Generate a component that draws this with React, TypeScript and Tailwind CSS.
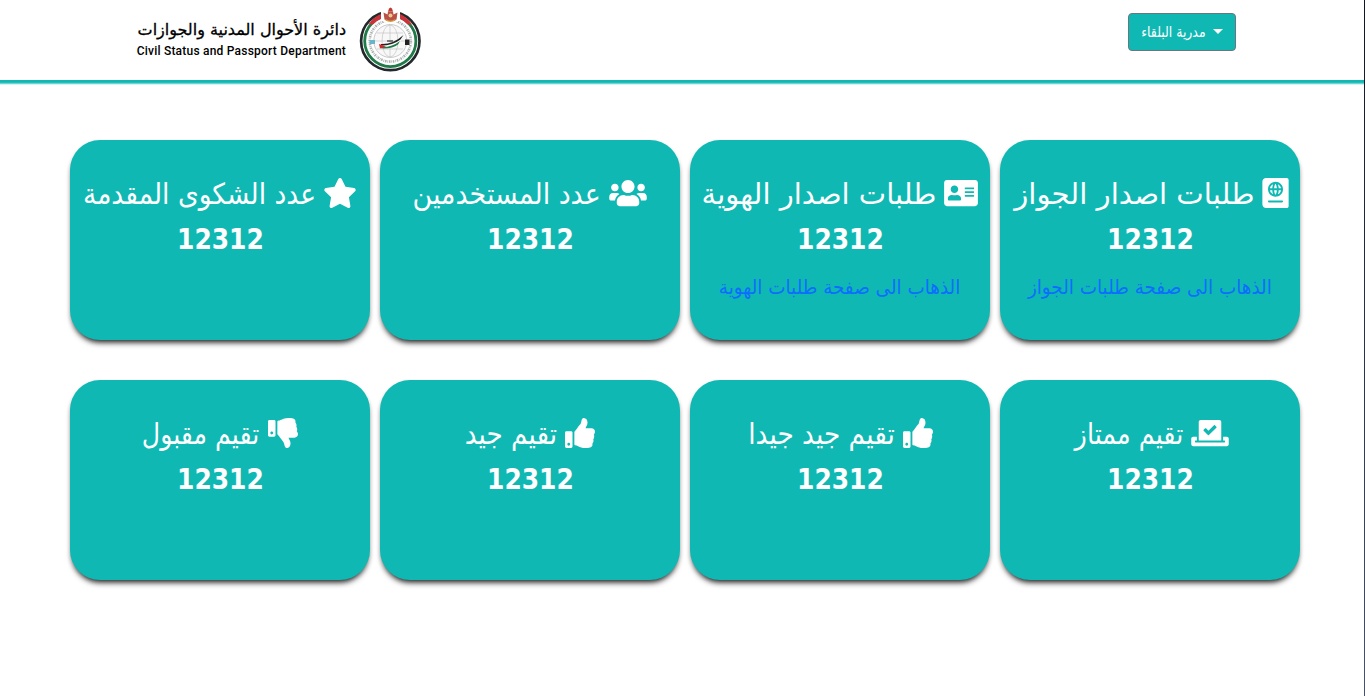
import type { ReactNode } from "react";
import { FaAddressCard, FaPassport, FaStar, FaThumbsDown, FaThumbsUp, FaUsers, FaVoteYea } from "react-icons/fa";

type Stat = {
  title: string;
  titleBox: string;
  titleScale: string;
  value: string;
  icon: ReactNode;
  link?: string;
};

const stats: Stat[] = [
  { title: "طلبات اصدار الجواز", titleBox: "w-[240px] ml-[3px]", titleScale: "scale-x-[1.007]", value: "12312", icon: <FaPassport className="h-[30px] w-[27px] shrink-0" />, link: "الذهاب الى صفحة طلبات الجواز" },
  { title: "طلبات اصدار الهوية", titleBox: "w-[233px]", titleScale: "scale-x-100", value: "12312", icon: <FaAddressCard className="h-[30px] w-[34px] shrink-0" />, link: "الذهاب الى صفحة طلبات الهوية" },
  { title: "عدد المستخدمين", titleBox: "w-[187px]", titleScale: "scale-x-[0.926]", value: "12312", icon: <FaUsers className="h-[30px] w-[38px] shrink-0" /> },
  { title: "عدد الشكوى المقدمة", titleBox: "w-[232px]", titleScale: "scale-x-[0.914]", value: "12312", icon: <FaStar className="h-[30px] w-[34px] shrink-0" /> },
  { title: "تقيم ممتاز", titleBox: "w-[109px] ml-[3px]", titleScale: "scale-x-[0.877]", value: "12312", icon: <FaVoteYea className="h-[30px] w-[38px] shrink-0" /> },
  { title: "تقيم جيد جيدا", titleBox: "w-[146px] ml-px", titleScale: "scale-x-[0.91]", value: "12312", icon: <FaThumbsUp className="h-[30px] w-[30px] shrink-0" /> },
  { title: "تقيم جيد", titleBox: "w-[92px]", titleScale: "scale-x-[0.906]", value: "12312", icon: <FaThumbsUp className="h-[30px] w-[30px] shrink-0" /> },
  { title: "تقيم مقبول", titleBox: "w-[117px]", titleScale: "scale-x-[0.869]", value: "12312", icon: <FaThumbsDown className="h-[30px] w-[30px] shrink-0" /> },
];

function Emblem() {
  return (
    <svg viewBox="0 0 64 66" className="h-[66px] w-[64px]">
      <circle cx="32.3" cy="35" r="29.2" fill="#fff" stroke="#22282b" strokeWidth="2.7" />
      <circle cx="32.3" cy="35" r="25.6" fill="none" stroke="#1f7a48" strokeWidth="2.8" />
      <path d="M10.5 18.5 A28 28 0 0 1 24 7.5 L24 12.5 A24 24 0 0 0 15 18.5Z" fill="#c9343a" />
      <path d="M54.1 18.5 A28 28 0 0 0 41 7.5 L41 12.5 A24 24 0 0 1 49.6 18.5Z" fill="#c9343a" />
      <circle cx="32.3" cy="35" r="20.6" fill="none" stroke="#aeb2b2" strokeWidth="2.6" strokeDasharray="1.6 .8 .7 .9" />
      <circle cx="32.3" cy="35" r="16.5" fill="#f8f8f8" stroke="#b5b5b5" strokeWidth=".7" />
      <g fill="none" stroke="#bcbcbc" strokeWidth=".6">
        <ellipse cx="32" cy="35" rx="8" ry="16" />
        <path d="M16 35H48M19 27H45M19 43H45M32 19V51" />
      </g>
      <path d="M21 38.5Q35 39 45.5 29L42 36Q35 42 22 42Z" fill="#fff" />
      <path d="M23 38Q35 38.5 45.5 29L42.5 33.5Q35 39.5 23 39.5Z" fill="#222" />
      <path d="M23 41Q34 41.5 42 35L40 38.5Q34 43 23 42.3Z" fill="#1f7a48" />
      <path d="M21 38L28 40.2L22 42.6Z" fill="#d8232e" />
      <path d="M29 35H35" stroke="#333" strokeWidth="1.2" />
      <rect x="11.5" y="34" width="5.5" height="4" fill="#69b4ca" />
      <rect x="47" y="33.5" width="4.5" height="5.5" fill="#222" />
      <path d="M23 2H42V14.5Q37 17 32.5 17Q28 17 23 14.5Z" fill="#fff" />
      <path d="M26.5 13.5L25.5 6.5L29.5 8.5L30 5.5H35L35.5 8.5L39.5 6.5L38.5 13.5L36 15H29Z" fill="#b9504a" />
      <path d="M30 5.5L31 2.5L32.5 1.5L34 2.5L35 5.5Z" fill="#c23a35" />
      <circle cx="32.5" cy="9.5" r="2" fill="#ecc98b" />
      <path d="M27.5 13.5Q32.5 17 37.5 13.5" fill="none" stroke="#d29d3f" strokeWidth="1.4" />
    </svg>
  );
}

function Header() {
  return (
    <header>
      <div className="flex h-20 items-start gap-3 pl-[134px]">
        <div className="flex w-[212px] flex-col items-end pt-[18px] text-black">
          <p dir="rtl" className="whitespace-nowrap font-['DejaVu_Sans',sans-serif] text-[16px] leading-[24px] [-webkit-text-stroke:0.3px_black]">دائرة الأحوال المدنية والجوازات</p>
          <p className="mt-px whitespace-nowrap font-['Roboto',sans-serif] text-[12px] font-medium leading-[16px] tracking-[0.22px]">Civil Status and Passport Department</p>
        </div>
        <div className="mt-[6px] shrink-0"><Emblem /></div>
      </div>
      <div className="h-[2px] bg-[#10b8b3]" />
      <div className="h-px bg-[#25beb9]" />
      <div className="h-px bg-[#6fd4d1]" />
      <div className="h-px bg-[#d5f2f1]" />
    </header>
  );
}

function StatCard({ stat }: { stat: Stat }) {
  return (
    <section className="flex h-[200px] w-[300px] flex-col items-center rounded-[30px] bg-[#10b8b3] pt-[33px] text-white shadow-[0_5px_6px_-3px_rgba(0,0,0,0.95),0_2px_4px_rgba(0,0,0,0.12)]">
      <h2 className="flex h-[39px] items-center gap-2 whitespace-nowrap">
        {stat.icon}
        <span className={`flex justify-center pt-[3px] ${stat.titleBox}`}>
          <span className={`shrink-0 font-['DejaVu_Sans',sans-serif] text-[29px] leading-[39px] ${stat.titleScale}`}>{stat.title}</span>
        </span>
      </h2>
      <p className="mt-[5px] scale-x-[0.86] font-['DejaVu_Sans',sans-serif] text-[29px] font-bold leading-[45px]">{stat.value}</p>
      {stat.link && (
        <a href="#" className="mt-[10px] scale-x-[0.918] whitespace-nowrap font-['DejaVu_Sans',sans-serif] text-[20px] leading-[30px] text-[#0d6efd]">{stat.link}</a>
      )}
    </section>
  );
}

export default function App() {
  return (
    <div className="relative h-[696px] w-[1365px] overflow-hidden bg-white">
      <Header />
      <button dir="rtl" className="absolute left-[1128px] top-[13px] flex h-[38px] w-[108px] items-center gap-[7px] rounded-[4px] border border-[#6c757d] bg-[#10b8b3] px-3 text-white">
        <span className="-mt-[2px] h-0 w-0 shrink-0 border-x-[5px] border-t-[5px] border-x-transparent border-t-white" />
        <span className="origin-right scale-x-[0.83] whitespace-nowrap pt-px font-['DejaVu_Sans',sans-serif] text-[15px]">مدرية البلقاء</span>
      </button>
      <main dir="rtl" className="ml-[70px] mt-[55px] grid w-[1230px] grid-cols-[repeat(4,300px)] gap-x-[10px] gap-y-10">
        {stats.map((stat) => (
          <StatCard key={stat.title} stat={stat} />
        ))}
      </main>
      <div className="absolute right-0 top-0 h-full w-px bg-linear-to-b from-[#11151f] to-[#475467]" />
    </div>
  );
}
